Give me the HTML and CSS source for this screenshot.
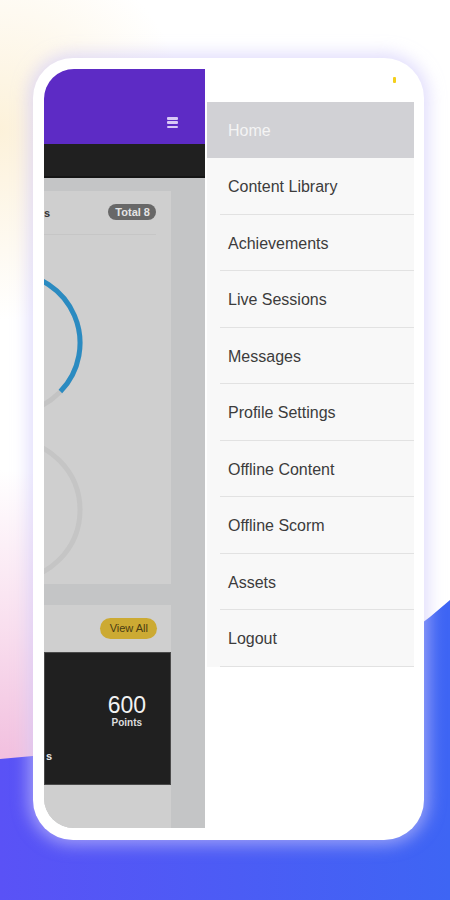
FILE: index.html
```html
<!DOCTYPE html>
<html>
	<head>
		<meta charset='utf-8' />
		<title>Menu</title>
		<link rel="stylesheet" href="styles.css">
	</head>
	<body>
		<div class="page">
			<svg class="backdrop" viewBox="0 0 450 900" width="450" height="900">
				<defs>
					<linearGradient id="wave" x1="0" y1="0" x2="1" y2="0">
						<stop offset="0" stop-color="#5a52f6" />
						<stop offset="1" stop-color="#3e65f4" />
					</linearGradient>
				</defs>
				<path d="M0,759 Q300,735 450,600 L450,900 L0,900 Z" fill="url(#wave)" />
			</svg>

			<div class="device">
				<div class="screen">
					<div class="app">
						<div class="app-header">
							<span class="burger"><i></i><i></i><i></i></span>
						</div>
						<div class="app-tabs"></div>
						<div class="app-content">
							<div class="card card-courses">
								<div class="card-head">
									<span class="card-title">s</span>
									<span class="badge-total">Total 8</span>
								</div>
								<svg class="rings" width="127" height="349" viewBox="0 0 127 349">
									<circle cx="-34" cy="108" r="70" fill="none" stroke="#c3c3c3" stroke-width="5" />
									<path d="M-34,38 A70,70 0 0 1 16.4,156.6" fill="none" stroke="#2b8bc1" stroke-width="5" />
									<circle cx="-34" cy="275" r="70" fill="none" stroke="#c5c5c5" stroke-width="5" />
								</svg>
							</div>
							<div class="card card-points">
								<div class="card-head">
									<span class="btn-view">View All</span>
								</div>
								<div class="points-panel">
									<div class="points">
										<div class="points-value">600</div>
										<div class="points-label">Points</div>
									</div>
									<span class="points-badges">s</span>
								</div>
							</div>
						</div>
					</div>

					<nav class="drawer">
						<div class="drawer-top"><span class="dot"></span></div>
						<ul class="menu">
							<li class="menu-item active"><span>Home</span></li>
							<li class="menu-item"><span>Content Library</span></li>
							<li class="menu-item"><span>Achievements</span></li>
							<li class="menu-item"><span>Live Sessions</span></li>
							<li class="menu-item"><span>Messages</span></li>
							<li class="menu-item"><span>Profile Settings</span></li>
							<li class="menu-item"><span>Offline Content</span></li>
							<li class="menu-item"><span>Offline Scorm</span></li>
							<li class="menu-item"><span>Assets</span></li>
							<li class="menu-item"><span>Logout</span></li>
						</ul>
					</nav>
				</div>
			</div>
		</div>
	</body>
</html>
```

FILE: styles.css
```css
body {
	margin: 0;
	font-family: "Liberation Sans", Arial, sans-serif;
	color: #333;
}
.page {
	position: relative;
	width: 450px;
	height: 900px;
	overflow: hidden;
	box-sizing: border-box;
	padding: 58px 0 0 33px;
	background:
		radial-gradient(circle at 0 130px, rgba(252, 240, 214, 0.9) 0, rgba(255, 255, 255, 0) 190px),
		radial-gradient(ellipse 260px 320px at 0 790px, #f0b8db 0, rgba(247, 214, 234, 0.8) 50%, rgba(255, 255, 255, 0) 100%),
		#fff;
}
.backdrop {
	position: absolute;
	left: 0;
	top: 0;
}

/* phone frame */
.device {
	position: relative;
	width: 391px;
	height: 782px;
	box-sizing: border-box;
	padding: 11px 10px 12px 11px;
	background: #fff;
	border-radius: 40px;
	box-shadow: 0 0 16px 5px rgba(206, 200, 250, 0.6);
}
.screen {
	display: flex;
	height: 100%;
	border-radius: 30px;
	overflow: hidden;
	background: #fff;
}

/* app behind the drawer */
.app {
	width: 161px;
	display: flex;
	flex-direction: column;
	flex-shrink: 0;
}
.app-header {
	height: 75px;
	box-sizing: border-box;
	background: #5d2bc5;
	display: flex;
	justify-content: flex-end;
	align-items: flex-end;
	padding: 0 27px 16px 0;
}
.burger {
	display: flex;
	flex-direction: column;
	justify-content: space-between;
	width: 11px;
	height: 11px;
}
.burger i {
	display: block;
	height: 2.5px;
	border-radius: 1px;
	background: #d8c9f6;
}
.app-tabs {
	height: 34px;
	box-sizing: border-box;
	background: #202020;
	border-bottom: 2px solid #151515;
}
.app-content {
	flex: 1;
	display: flex;
	flex-direction: column;
	gap: 21px;
	padding-top: 13px;
	background: #c4c5c6;
	overflow: hidden;
}
.card {
	width: 127px;
	background: #cfcfcf;
}
.card-courses {
	height: 393px;
}
.card-points {
	flex: 1;
}
.card-head {
	display: flex;
	align-items: center;
	justify-content: space-between;
	height: 44px;
	box-sizing: border-box;
	padding-right: 14px;
}
.card-courses .card-head {
	border-bottom: 1px solid #c6c6c6;
	margin-right: 15px;
	padding-right: 0;
}
.card-title {
	margin-left: 0;
	font-size: 11px;
	font-weight: bold;
	color: #333;
}
.badge-total {
	height: 16px;
	line-height: 16px;
	padding: 0 6px 0 7px;
	border-radius: 8px;
	background: #686868;
	color: #e4e4e4;
	font-size: 11px;
	font-weight: bold;
	margin-top: -2px;
}
.rings {
	display: block;
}
.card-points .card-head {
	height: 47px;
	justify-content: flex-end;
}
.btn-view {
	height: 21px;
	line-height: 21px;
	padding: 0 9px 0 10px;
	border-radius: 11px;
	background: #ccaa33;
	color: #4a3c12;
	font-size: 11px;
}
.points-panel {
	height: 133px;
	box-sizing: border-box;
	border: 1px solid #4a4a4a;
	background: #202020;
	display: flex;
	flex-direction: column;
	align-items: flex-end;
	padding: 40px 24px 0 0;
}
.points {
	text-align: center;
	color: #f2f2f2;
}
.points-value {
	font-size: 23px;
	line-height: 24px;
}
.points-label {
	font-size: 10px;
	font-weight: bold;
	color: #dcdcdc;
}
.points-badges {
	align-self: flex-start;
	margin: 22px 0 0 1px;
	font-size: 11px;
	font-weight: bold;
	color: #e8e8e8;
}

/* side drawer */
.drawer {
	flex: 1;
	background: #fff;
	padding-left: 2px;
}
.drawer-top {
	height: 33px;
	display: flex;
	justify-content: flex-end;
	padding: 8px 18px 0 0;
	box-sizing: border-box;
}
.dot {
	width: 3px;
	height: 6px;
	border-radius: 1px;
	background: #f4cf1c;
}
.menu {
	list-style: none;
	margin: 0;
	padding: 0;
}
.menu-item {
	background: #f8f8f8;
	padding-left: 13px;
	font-size: 16px;
	color: #3c3c3c;
}
.menu-item span {
	display: block;
	height: 55.5px;
	line-height: 58px;
	padding-left: 8px;
	border-bottom: 1px solid #e2e2e2;
}
.menu-item.active {
	background: #d1d1d5;
	color: #f4f4f4;
}
.menu-item.active span {
	height: 56px;
	line-height: 57px;
	border-bottom: none;
}
```
